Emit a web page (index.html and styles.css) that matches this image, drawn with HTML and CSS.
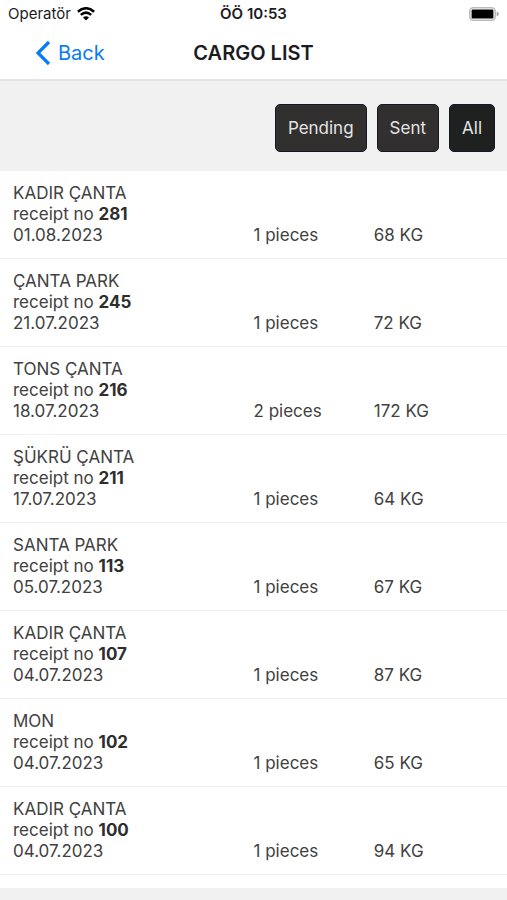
FILE: index.html
```html
<!DOCTYPE html>
<html lang="en">
<head>
<meta charset="utf-8">
<meta name="viewport" content="width=device-width, initial-scale=1">
<title>Cargo List</title>
<link rel="stylesheet" href="styles.css">
</head>
<body>
<div class="status">
  <div class="carrier"><span>Operatör</span>
    <svg class="wifi" viewBox="0 0 18 14" aria-hidden="true"><path d="M.9 4.7Q9-2.2 17.1 4.7M3.8 7.9Q9 3.4 14.2 7.9" fill="none" stroke="#000" stroke-width="2.5"/><path d="M9 13.6 6 10.5Q9 8 12 10.5Z"/></svg>
  </div>
  <div class="clock">ÖÖ 10:53</div>
  <svg class="battery" viewBox="0 0 30 14" aria-hidden="true"><rect x=".8" y=".8" width="25.4" height="12.4" rx="3.6" fill="#fff" stroke="#bbb" stroke-width="1.6"/><rect x="2.6" y="2.6" width="21.8" height="8.8" rx="1.2"/><path d="M27.6 4.6Q30 5.4 30 7T27.6 9.4Z" fill="#aaa"/></svg>
</div>
<header class="nav">
  <a class="back" href="#"><svg viewBox="0 0 16 26" aria-hidden="true"><path d="M14 2 3 13l11 11" fill="none" stroke="#087cf7" stroke-width="3.2"/></svg>Back</a>
  <h1>CARGO LIST</h1>
</header>
<main>
  <div class="filters">
    <button type="button">Pending</button>
    <button type="button">Sent</button>
    <button type="button" class="active">All</button>
  </div>
  <ul class="list">
    <li><div>KADIR ÇANTA<br>receipt no <b>281</b><br>01.08.2023</div><span>1 pieces</span><span>68 KG</span></li>
    <li><div>ÇANTA PARK<br>receipt no <b>245</b><br>21.07.2023</div><span>1 pieces</span><span>72 KG</span></li>
    <li><div>TONS ÇANTA<br>receipt no <b>216</b><br>18.07.2023</div><span>2 pieces</span><span>172 KG</span></li>
    <li><div>ŞÜKRÜ ÇANTA<br>receipt no <b>211</b><br>17.07.2023</div><span>1 pieces</span><span>64 KG</span></li>
    <li><div>SANTA PARK<br>receipt no <b>113</b><br>05.07.2023</div><span>1 pieces</span><span>67 KG</span></li>
    <li><div>KADIR ÇANTA<br>receipt no <b>107</b><br>04.07.2023</div><span>1 pieces</span><span>87 KG</span></li>
    <li><div>MON<br>receipt no <b>102</b><br>04.07.2023</div><span>1 pieces</span><span>65 KG</span></li>
    <li><div>KADIR ÇANTA<br>receipt no <b>100</b><br>04.07.2023</div><span>1 pieces</span><span>94 KG</span></li>
  </ul>
</main>
</body>
</html>
```
FILE: styles.css
```css
* { box-sizing: border-box; }
body {
  margin: 0;
  background: #f1f1f1;
  color: #414141;
  font: 17px/21px Inter, "Liberation Sans", sans-serif;
}
.status {
  display: grid;
  grid-template-columns: 1fr auto 1fr;
  align-items: center;
  height: 27px;
  padding: 0 8px;
  background: #fff;
  color: #1c1c1e;
  font-size: 15px;
}
.carrier { display: flex; align-items: center; gap: 6px; }
.wifi { width: 18px; height: 14px; }
.clock { font-weight: 600; }
.battery { width: 30px; height: 14px; justify-self: end; }
.nav {
  display: grid;
  grid-template-columns: 1fr auto 1fr;
  align-items: center;
  height: 54px;
  padding: 0 35px;
  background: #fff;
  border-bottom: 2px solid #e4e4e4;
}
.back {
  display: flex;
  align-items: center;
  gap: 7px;
  color: #087cf7;
  font-size: 20px;
  text-decoration: none;
}
.back svg { width: 16px; height: 26px; }
h1 { margin: 0; color: #1c1c1e; font-size: 20px; font-weight: 600; }
.filters {
  display: flex;
  justify-content: flex-end;
  gap: 10px;
  padding: 23px 12px 19px;
}
button {
  height: 48px;
  padding: 0 12px;
  border: 1px solid #17172a;
  border-radius: 5px;
  background: #32302f;
  color: #e4e4e4;
  font: inherit;
}
.active { background: #1f2020; }
.list {
  margin: 0;
  padding: 0 0 13px;
  list-style: none;
  background: #fff;
}
li {
  display: grid;
  grid-template-columns: 2fr 1fr 1fr;
  align-items: end;
  padding: 12px 13px;
  border-bottom: 1px solid #f1f1f1;
}
b { color: #2e2e2e; }
```
